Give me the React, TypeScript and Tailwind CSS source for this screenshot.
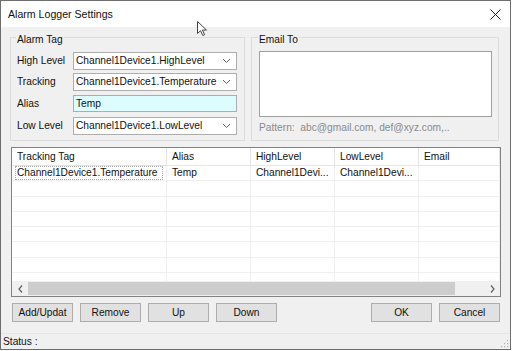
import React from "react";

const Chevron = () => (
  <svg width="9" height="6" viewBox="0 0 9 6" className="shrink-0">
    <polyline points="1,1 4.5,4.5 8,1" fill="none" stroke="#606060" strokeWidth="1" />
  </svg>
);

const Combo = ({ value }: { value: string }) => (
  <div className="flex h-[18px] w-[164px] items-center justify-between border border-[#adadad] bg-white pl-[2px] pr-[5px]">
    <span className="whitespace-nowrap">{value}</span>
    <Chevron />
  </div>
);

const Row = ({ label, children, mt }: { label: string; children: React.ReactNode; mt: string }) => (
  <div className={`flex items-center ${mt}`}>
    <span className="w-[56px] shrink-0 whitespace-nowrap">{label}</span>
    {children}
  </div>
);

const Btn = ({ label }: { label: string }) => (
  <div className="flex h-[19px] w-[61px] items-center justify-center border border-[#adadad] bg-[#e1e1e1]">
    {label}
  </div>
);

const cols = [
  { name: "Tracking Tag", w: "w-[155px]" },
  { name: "Alias", w: "w-[84px]" },
  { name: "HighLevel", w: "w-[84px]" },
  { name: "LowLevel", w: "w-[84px]" },
  { name: "Email", w: "w-[81px]" },
];

export default function App() {
  const rows = Array.from({ length: 8 });
  return (
    <div
      className="relative h-[351px] w-[512px] overflow-hidden bg-white text-[10.2px] leading-[12px] text-[#111]"
      style={{ fontFamily: '"Liberation Sans", Arial, sans-serif' }}
    >
      <div className="flex h-[350px] w-[511px] flex-col border border-[#6e6e6e]">
        {/* Title bar */}
        <div className="flex h-[26px] shrink-0 items-center justify-between bg-white pl-[7px] pr-[9px]">
          <span className="text-[10.6px]">Alarm Logger Settings</span>
          <svg width="11" height="11" viewBox="0 0 11 11">
            <path d="M0.5 0.5 L10.5 10.5 M10.5 0.5 L0.5 10.5" stroke="#222" strokeWidth="1" />
          </svg>
        </div>

        {/* Body */}
        <div className="flex flex-1 flex-col bg-[#f0f0f0]">
          <div className="flex pt-[10px]">
            {/* Alarm Tag group */}
            <div className="relative ml-[9px] h-[104px] w-[235px] border border-[#dcdcdc] pl-[6px] pt-[14px]">
              <span className="absolute left-[5px] top-[-3px] bg-[#f0f0f0] px-[1px] leading-[10px]">Alarm Tag</span>
              <Row label="High Level" mt="">
                <Combo value="Channel1Device1.HighLevel" />
              </Row>
              <Row label="Tracking" mt="mt-[3px]">
                <Combo value="Channel1Device1.Temperature" />
              </Row>
              <Row label="Alias" mt="mt-[4px]">
                <div className="flex h-[17px] w-[164px] items-center border border-[#adadad] bg-[#dcfcfe] pl-[2px]">
                  Temp
                </div>
              </Row>
              <Row label="Low Level" mt="mt-[5px]">
                <Combo value="Channel1Device1.LowLevel" />
              </Row>
            </div>

            {/* Email To group */}
            <div className="relative ml-[6px] h-[104px] w-[248px] border border-[#dcdcdc] pl-[7px] pt-[13px]">
              <span className="absolute left-[6px] top-[-3px] bg-[#f0f0f0] px-[1px] leading-[10px]">Email To</span>
              <div className="h-[66px] w-[233px] border border-[#a0a0a0] bg-white" />
              <div className="mt-[5px] whitespace-nowrap text-[#8a8a8a]">
                Pattern:&nbsp; abc@gmail.com, def@xyz.com,..
              </div>
            </div>
          </div>

          {/* List view */}
          <div className="ml-[10px] mt-[6px] flex h-[150px] w-[490px] flex-col border border-[#828282] bg-white">
            <div className="flex h-[18px] shrink-0 border-b border-[#e5e5e5]">
              {cols.map((c) => (
                <div key={c.name} className={`${c.w} flex shrink-0 items-center border-r border-[#e5e5e5] pl-[5px]`}>
                  {c.name}
                </div>
              ))}
            </div>
            <div className="flex-1 overflow-hidden">
              {rows.map((_, i) => (
                <div key={i} className="flex h-[15.3px] border-b border-[#f0f0f0]">
                  {cols.map((c, j) => (
                    <div
                      key={c.name}
                      className={`${c.w} flex shrink-0 items-center border-r border-[#f0f0f0] pl-[5px] whitespace-nowrap ${
                        i === 0 && j === 0 ? "relative" : ""
                      }`}
                    >
                      {i === 0 && j === 0 && (
                        <span className="absolute inset-x-[3px] inset-y-[0px] border border-dotted border-[#a8a8a8]" />
                      )}
                      {i === 0 ? ["Channel1Device1.Temperature", "Temp", "Channel1Devi...", "Channel1Devi...", ""][j] : ""}
                    </div>
                  ))}
                </div>
              ))}
            </div>
            {/* Scrollbar */}
            <div className="flex h-[15px] shrink-0 items-center bg-[#f0f0f0]">
              <div className="flex h-full w-[16px] items-center justify-center">
                <svg width="5" height="8" viewBox="0 0 5 8">
                  <polyline points="4,0.5 1,4 4,7.5" fill="none" stroke="#606060" strokeWidth="1.2" />
                </svg>
              </div>
              <div className="h-[13px] w-[427px] bg-[#cdcdcd]" />
              <div className="flex-1" />
              <div className="flex h-full w-[16px] items-center justify-center">
                <svg width="5" height="8" viewBox="0 0 5 8">
                  <polyline points="1,0.5 4,4 1,7.5" fill="none" stroke="#606060" strokeWidth="1.2" />
                </svg>
              </div>
            </div>
          </div>

          {/* Buttons */}
          <div className="ml-[11px] mt-[6px] flex w-[488px] gap-[7px]">
            <Btn label="Add/Updat" />
            <Btn label="Remove" />
            <Btn label="Up" />
            <Btn label="Down" />
            <div className="flex-1" />
            <Btn label="OK" />
            <Btn label="Cancel" />
          </div>

          <div className="flex-1" />
          {/* Status bar */}
          <div className="relative flex h-[16px] shrink-0 items-center border-t border-[#e6e6e6] pl-[2px]">
            Status :
            <svg className="absolute bottom-[1px] right-[1px]" width="9" height="9" viewBox="0 0 9 9">
              <g fill="#b0b0b0">
                <rect x="7" y="1" width="1.2" height="1.2" />
                <rect x="4" y="4" width="1.2" height="1.2" />
                <rect x="7" y="4" width="1.2" height="1.2" />
                <rect x="1" y="7" width="1.2" height="1.2" />
                <rect x="4" y="7" width="1.2" height="1.2" />
                <rect x="7" y="7" width="1.2" height="1.2" />
              </g>
            </svg>
          </div>
        </div>
      </div>

      {/* Mouse pointer */}
      <svg className="absolute left-[197px] top-[21px]" width="11" height="16" viewBox="0 0 11 16">
        <path d="M0.5 0.5 L0.5 12.5 L3.5 9.7 L5.8 14.5 L7.6 13.7 L5.4 9 L9.5 9 Z" fill="#fff" stroke="#444" strokeWidth="1" strokeLinejoin="round" />
      </svg>
    </div>
  );
}
